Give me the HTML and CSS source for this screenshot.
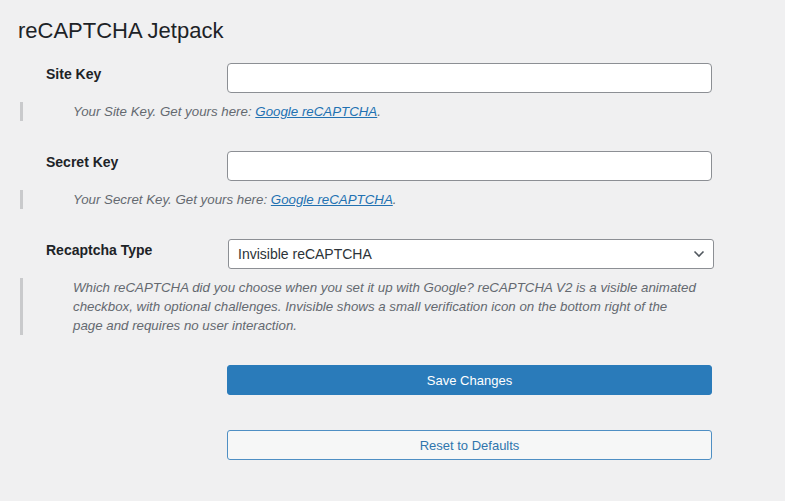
FILE: index.html
```html
<!DOCTYPE html>
<html lang="en">
<head>
    <meta charset="UTF-8">
    <meta name="viewport" content="width=device-width, initial-scale=1.0">
    <title>reCAPTCHA Jetpack</title>
    <link rel="stylesheet" href="styles.css">
</head>
<body>
    <div class="wrap">
        <h2 class="page-title">reCAPTCHA Jetpack</h2>

        <form class="settings">
            <!-- Site key -->
            <div class="field-row">
                <label class="field-label" for="site-key">Site Key</label>
                <div class="field-control">
                    <input type="text" id="site-key" class="text-input">
                </div>
            </div>
            <p class="description">Your Site Key. Get yours here: <a href="#">Google reCAPTCHA</a>.</p>

            <!-- Secret key -->
            <div class="field-row">
                <label class="field-label" for="secret-key">Secret Key</label>
                <div class="field-control">
                    <input type="text" id="secret-key" class="text-input">
                </div>
            </div>
            <p class="description">Your Secret Key. Get yours here: <a href="#">Google reCAPTCHA</a>.</p>

            <!-- Type -->
            <div class="field-row">
                <label class="field-label" for="captcha-type">Recaptcha Type</label>
                <div class="field-control select-wrap">
                    <select id="captcha-type" class="select-input">
                        <option>Invisible reCAPTCHA</option>
                        <option>reCAPTCHA V2</option>
                    </select>
                    <svg class="chevron" width="12" height="8" viewBox="0 0 12 8"><path d="M1.5 1.5 L6 6 L10.5 1.5" fill="none" stroke="#50575e" stroke-width="1.6"/></svg>
                </div>
            </div>
            <p class="description">Which reCAPTCHA did you choose when you set it up with Google? reCAPTCHA V2 is a visible animated checkbox, with optional challenges. Invisible shows a small verification icon on the bottom right of the page and requires no user interaction.</p>

            <!-- Buttons -->
            <div class="actions">
                <button type="button" class="btn btn-primary">Save Changes</button>
                <button type="button" class="btn btn-secondary">Reset to Defaults</button>
            </div>
        </form>
    </div>
</body>
</html>
```

FILE: styles.css
```css
/* Page base */
body {
    margin: 0;
    background: #f0f0f1;
    font-family: "Liberation Sans", Arial, sans-serif;
    color: #1d2327;
}
.wrap {
    padding: 18px 0 0 18px;
}
.page-title {
    margin: 0 0 19px;
    font-size: 22px;
    font-weight: 400;
    line-height: 26px;
}
/* Label + control rows */
.field-row {
    display: flex;
    align-items: flex-start;
    padding-left: 28px;
}
.field-label {
    width: 181px;
    font-size: 14px;
    font-weight: bold;
    line-height: 20px;
    color: #1d2327;
    margin-top: 1px;
}
.field-control {
    width: 485px;
}
.text-input {
    box-sizing: border-box;
    width: 100%;
    height: 30px;
    margin: 0;
    border: 1px solid #8c8f94;
    border-radius: 4px;
    background: #fff;
}
.select-wrap {
    position: relative;
    width: 486px;
    margin-left: 1px;
}
.select-input {
    box-sizing: border-box;
    width: 100%;
    height: 30px;
    margin: 0;
    padding: 0 24px 0 9px;
    border: 1px solid #8c8f94;
    border-radius: 3px;
    background: #fff;
    font-family: "Liberation Sans", Arial, sans-serif;
    font-size: 14px;
    color: #2c3338;
    appearance: none;
}
.chevron {
    position: absolute;
    right: 9px;
    top: 11px;
    pointer-events: none;
}
/* Help text with grey bar on the left */
.description {
    margin: 9px 0 30px 2px;
    padding-left: 50px;
    border-left: 3px solid #c9cacc;
    width: 626px;
    font-size: 13.3px;
    font-style: italic;
    line-height: 19px;
    color: #646970;
}
.description a {
    color: #2271b1;
}
/* Buttons */
.actions {
    display: flex;
    flex-direction: column;
    gap: 35px;
    padding-left: 209px;
}
.btn {
    box-sizing: border-box;
    width: 485px;
    height: 30px;
    border-radius: 3px;
    font-family: "Liberation Sans", Arial, sans-serif;
    font-size: 13px;
    cursor: pointer;
}
.btn-primary {
    background: #2a7bba;
    border: 1px solid #2a7bba;
    color: #fff;
}
.btn-secondary {
    background: #f6f7f7;
    border: 1px solid #4f8fc4;
    color: #2f75ad;
}
```
